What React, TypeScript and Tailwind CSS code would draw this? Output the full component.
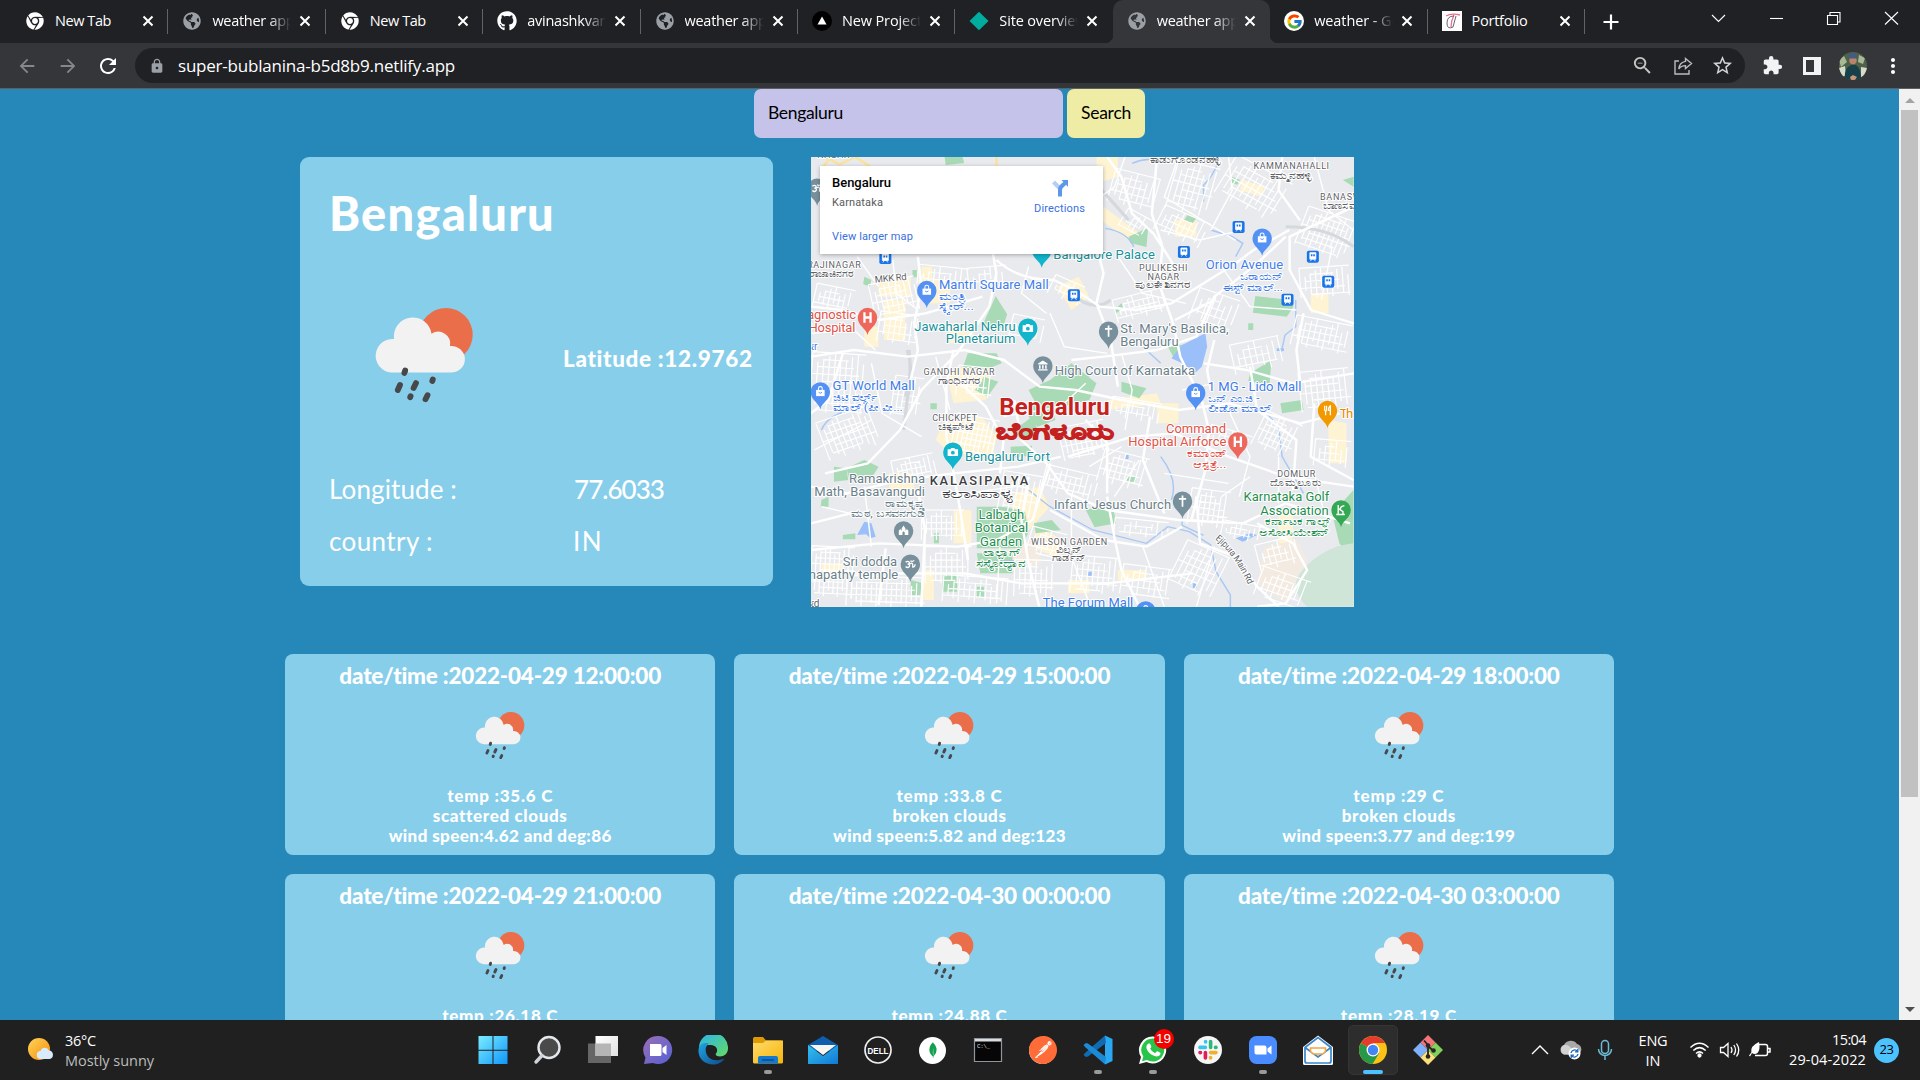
import React, { useLayoutEffect, useRef } from "react";
import { FaChrome, FaGithub, FaGlobeAmericas } from "react-icons/fa";
import { FcGoogle } from "react-icons/fc";
import {
  MdArrowBack,
  MdArrowForward,
  MdExtension,
  MdLock,
  MdMoreVert,
  MdOutlineZoomOut,
  MdRefresh,
  MdStarBorder,
} from "react-icons/md";
import { SiMongodb, SiPostman } from "react-icons/si";

/* Text tracked so that it fills a given width. */
function Fit({ w, className = "", children }: { w: number; className?: string; children: string }) {
  const ref = useRef<HTMLSpanElement>(null);
  useLayoutEffect(() => {
    const el = ref.current;
    if (!el) return;
    el.style.letterSpacing = "0px";
    const natural = el.getBoundingClientRect().width;
    el.style.letterSpacing = `${(w - natural) / children.length}px`;
  }, [w, children]);
  return (
    <span ref={ref} className={`inline-block whitespace-pre ${className}`}>
      {children}
    </span>
  );
}

/* ---------- Browser chrome ---------- */

type Tab = { title: string; w: number; icon: React.ReactNode; fade?: boolean; active?: boolean; line?: boolean };

const chromeIcon = <FaChrome className="size-[18px] text-white" />;
const globeIcon = <FaGlobeAmericas className="size-[18px] text-[#9aa0a6]" />;

const tabs: Tab[] = [
  { title: "New Tab", w: 56, icon: chromeIcon, line: true },
  { title: "weather app", w: 82, icon: globeIcon, fade: true, line: true },
  { title: "New Tab", w: 56, icon: chromeIcon, line: true },
  { title: "avinashkvar", w: 78, icon: <FaGithub className="size-5 text-white" />, fade: true, line: true },
  { title: "weather app", w: 82, icon: globeIcon, fade: true, line: true },
  {
    title: "New Project",
    w: 80,
    icon: (
      <svg viewBox="0 0 20 20" className="size-5">
        <circle cx="10" cy="10" r="10" fill="#000" />
        <path d="M10 5.500 14.500 13.500H5.500Z" fill="#fff" />
      </svg>
    ),
    fade: true,
    line: true,
  },
  {
    title: "Site overview",
    w: 87,
    icon: (
      <svg viewBox="0 0 20 20" className="size-5">
        <path d="M10 .8 19.500 10 10 19.200 .5 10Z" fill="#00ad9f" />
      </svg>
    ),
    fade: true,
  },
  { title: "weather app", w: 82, icon: globeIcon, fade: true, active: true },
  { title: "weather - Go", w: 86, icon: <span className="flex size-5 items-center justify-center rounded-full bg-white"><FcGoogle className="size-[17px]" /></span>, fade: true, line: true },
  {
    title: "Portfolio",
    w: 56,
    icon: (
      <svg viewBox="0 0 20 20" className="size-5">
        <path d="M0 0h20v20H0z" fill="#fff" />
        <path d="M4 5q5-3 14-1M12 4q-3 6-3 12" stroke="#e5738a" strokeWidth="1.300" fill="none" />
        <path d="M12 5Q5 5 5 12t6 4M14 5 11 16" stroke="#667" strokeWidth="1" fill="none" />
      </svg>
    ),
    line: true,
  },
];

function TabStrip() {
  return (
    <div className="flex h-[43px] bg-[#202124] pl-[11px] text-[14.500px] text-white">
      {tabs.map((t, i) => (
        <div
          key={i}
          className={
            t.active
              ? "relative flex w-[157.400px] items-center rounded-t-[10px] bg-[#35363a] pb-px pl-[14px]"
              : "relative flex w-[157.400px] items-center pb-px pl-[14px]"
          }
        >
          <span className="flex w-5 justify-center">{t.icon}</span>
          <span
            className={
              t.fade
                ? "ml-[10px] w-[79px] overflow-hidden pb-px [mask-image:linear-gradient(to_right,#000_72%,transparent_100%)]"
                : "ml-[10px] w-[79px] overflow-hidden pb-px"
            }
          >
            <Fit w={t.w}>{t.title}</Fit>
          </span>
          <svg viewBox="0 0 12 12" className="ml-[8px] size-3" stroke="#fff" strokeWidth="2">
            <path d="m1.500 1.500 9 9M10.500 1.500l-9 9" />
          </svg>
          {t.line && <span className="absolute right-0 top-[9px] h-[25px] w-px bg-[#606368]" />}
          {t.active && (
            <>
              <span className="absolute -left-2 bottom-0 size-2 bg-[radial-gradient(circle_at_0_0,transparent_8px,#35363a_8.500px)]" />
              <span className="absolute -right-2 bottom-0 size-2 bg-[radial-gradient(circle_at_100%_0,transparent_8px,#35363a_8.500px)]" />
            </>
          )}
        </div>
      ))}
      <div className="flex w-[52px] items-center justify-center">
        <svg viewBox="0 0 16 16" className="size-4" stroke="#fff" strokeWidth="2.200">
          <path d="M8 .5v15M.5 8h15" />
        </svg>
      </div>
      <svg viewBox="0 0 200 36" className="ml-auto mr-[19px] h-9 w-[200px]" fill="none" stroke="#fff" strokeWidth="1.100">
        <path d="m11 15 6.500 6.500 6.500-6.500" />
        <path d="M69 18.500h13" />
        <path d="M126.500 15.500h10v9h-10zM129 15v-2.500h10v9.500h-2.500" />
        <path d="m184 12 13 12.500M197 12l-13 12.500" />
      </svg>
    </div>
  );
}

function Toolbar() {
  return (
    <div className="flex h-[46px] items-start border-b border-[#5f5f62] bg-[#35363a] pt-[5px] text-[#dfe1e5]">
      <div className="flex h-[35px] w-[135px] items-center pl-4">
        <MdArrowBack className="size-[22px] text-[#85878b]" />
        <MdArrowForward className="ml-[19px] size-[22px] text-[#85878b]" />
        <MdRefresh className="ml-[17px] size-[24px] text-white" />
      </div>
      <div className="flex h-[35px] w-[1610px] items-center rounded-full bg-[#202124] pl-[14px] pr-[11px]">
        <MdLock className="size-4 text-[#9aa0a6]" />
        <Fit w={277} className="ml-[13px] text-[17px] leading-[24px] text-white">
          super-bublanina-b5d8b9.netlify.app
        </Fit>
        <MdOutlineZoomOut className="ml-auto size-[23px] text-[#c4c7c5]" />
        <svg viewBox="0 0 20 20" className="ml-[19px] size-5" fill="none" stroke="#b9bcc0" strokeWidth="1.400">
          <path d="M6 5H2v13h14v-4" />
          <path d="M12.500 2.500 18.500 7.500l-6 5V9.600C9.500 9.600 7.300 10.600 5.800 13 6.200 9 8.500 6 12.500 5.400Z" />
        </svg>
        <MdStarBorder className="ml-[18px] size-[23px] text-[#d0d2d5]" />
      </div>
      <div className="flex h-[35px] flex-1 items-center pl-[17px]">
        <MdExtension className="size-[21px] text-[#f1f3f4]" />
        <svg viewBox="0 0 18 18" className="ml-[20px] size-[18px]">
          <path d="M0 0h18v18H0z" fill="#f1f3f4" />
          <path d="M3 3h8v12H3z" fill="#35363a" />
        </svg>
        <svg viewBox="0 0 28 28" className="ml-[18px] size-7">
          <defs>
            <clipPath id="face">
              <circle cx="14" cy="14" r="14" />
            </clipPath>
          </defs>
          <g clipPath="url(#face)">
            <path d="M0 0h28v28H0z" fill="#4f6148" />
            <path d="M0 8l5-4 3 6-6 5zM20 3l6 3-2 6-5-2z" fill="#a9b995" />
            <path d="M0 16l6-2 1 9-5 3zM22 15l6 1v7l-6 2z" fill="#d6dccb" />
            <path d="M6 28q-1-8 2-12l4-3h5q5 3 5 15Z" fill="#16404a" />
            <circle cx="14" cy="8.500" r="3.700" fill="#b98468" />
            <path d="M9.500 6.500q0-6 5-5.500 4 .5 3.500 5.500Z" fill="#465a86" />
            <path d="m11 25 3-2 4 2-2 3h-4z" fill="#c99478" />
          </g>
        </svg>
        <MdMoreVert className="ml-[14px] size-[24px] text-white" />
      </div>
    </div>
  );
}

/* ---------- Weather drawing ---------- */

function WeatherIcon({ className }: { className: string }) {
  return (
    <svg viewBox="0 0 100 96" className={className}>
      <circle cx="72" cy="26.700" r="26.700" fill="#eb6e4b" />
      <path
        d="M17 64.500A16.700 16.700 0 1 1 20 31A18.800 18.800 0 0 1 57.500 25.800A12 12 0 0 1 76 38A13.300 13.300 0 1 1 78 64.500Z"
        fill="#f2f2f2"
      />
      <g stroke="#48484a" strokeWidth="5.800" strokeLinecap="round">
        <path d="m31.200 62.500-.8 2.400M26 77l-2.200 5M42 75l-2.400 5M36.600 88.200l-.4 1M58.800 71.500l-.5 1.500M53.500 87.200l-2 4" />
      </g>
    </svg>
  );
}

/* ---------- Map ---------- */

const BLUE = "#3f7de8";
const TEAL = "#16929c";
const GRAY = "#6b7f8a";
const RED = "#e25247";
const GREEN = "#1f8f50";
const AREA = "#5f6368";
const ORANGE = "#f29900";

const mx = (x: number) => x / 2.8 - 11;
const my = (y: number) => y / 3 - 77;

type Label = [string, number, number, number, number, string, number?];

const labels: Label[] = [
  ["NAGAR", 48, 234, 90, 9, AREA],
  ["ಕಾಡುಗೊಂಡನಹಳ್ಳಿ", 980, 250, 200, 8.5, AREA],
  ["KAMMANAHALLI", 1270, 268, 211, 9, AREA],
  ["ಕಮ್ಮನಹಳ್ಳಿ", 1315, 297, 120, 8.5, AREA],
  ["BANASW", 1456, 359, 114, 9, AREA],
  ["ಬಾಣಸವಾ", 1464, 386, 105, 8.5, AREA],
  ["RAJINAGAR", 20, 565, 150, 9, AREA],
  ["ರಾಜಾಜಿನಗರ", 24, 591, 126, 8.5, AREA],
  ["Mantri Square Mall", 389, 627, 307, 13, BLUE],
  ["ಮಂತ್ರಿ", 389, 660, 72, 10, BLUE],
  ["ಸ್ಕ್ವೇರ್...", 389, 691, 98, 10, BLUE],
  ["Bangalore Palace", 709, 537, 285, 13, TEAL],
  ["PULIKESHI", 949, 573, 136, 9, AREA],
  ["NAGAR", 973, 599, 88, 9, AREA],
  ["ಪುಲಕೇಶಿನಗರ", 937, 623, 158, 8.5, AREA],
  ["Orion Avenue", 1136, 567, 217, 13, BLUE],
  ["ಒರಾಯನ್", 1231, 601, 122, 10, BLUE],
  ["ಈಸ್ಟ್ ಮಾಲ್...", 1184, 632, 168, 10, BLUE],
  ["agnostic", 20, 718, 137, 13, RED],
  ["Hospital", 24, 757, 131, 13, RED],
  ["Jawaharlal Nehru", 320, 752, 284, 13, TEAL],
  ["Planetarium", 408, 790, 195, 13, TEAL],
  ["St. Mary's Basilica,", 897, 760, 303, 13, GRAY],
  ["Bengaluru", 897, 798, 163, 13, GRAY],
  ["ar", 31, 810, 18, 10, BLUE],
  ["High Court of Karnataka", 713, 885, 393, 13, GRAY],
  ["GANDHI NAGAR", 346, 886, 199, 9, AREA],
  ["ಗಾಂಧಿನಗರ", 385, 912, 122, 8.5, AREA],
  ["GT World Mall", 91, 930, 230, 13, BLUE],
  ["ಜಿಟಿ ವರ್ಲ್ಡ್", 91, 962, 124, 10, BLUE],
  ["ಮಾಲ್ (ಪೀ ವೀ...", 91, 994, 197, 10, BLUE],
  ["1 MG - Lido Mall", 1142, 933, 262, 13, BLUE],
  ["ಒನ್ ಎಂ.ಜಿ -", 1142, 965, 145, 10, BLUE],
  ["ಲೀಡೋ ಮಾಲ್", 1142, 995, 175, 10, BLUE],
  ["CHICKPET", 370, 1024, 126, 9, AREA],
  ["ಚಿಕ್ಕಪೇಟೆ", 385, 1050, 99, 8.5, AREA],
  ["Command", 1025, 1058, 168, 13, RED],
  ["Hospital Airforce", 919, 1098, 275, 13, RED],
  ["ಕಮಾಂಡ್", 1084, 1132, 109, 10, RED],
  ["ಆಸ್ಪತ್ರೆ...", 1100, 1164, 94, 10, RED],
  ["Bengaluru Fort", 462, 1143, 238, 13, TEAL],
  ["Ramakrishna", 137, 1208, 213, 13, GRAY],
  ["Math, Basavangudi", 40, 1248, 310, 13, GRAY],
  ["ರಾಮಕೃಷ್ಣ", 238, 1281, 112, 10, GRAY],
  ["ಮಠ, ಬಸವನಗುಡಿ", 143, 1311, 205, 10, GRAY],
  ["KALASIPALYA", 363, 1215, 276, 12.8, "#3c4043", 500],
  ["ಕಲಾಸಿಪಾಳ್ಯ", 398, 1254, 204, 12, "#3c4043", 500],
  ["DOMLUR", 1336, 1191, 107, 9, AREA],
  ["ದೊಮ್ಮಲೂರು", 1316, 1217, 144, 8.5, AREA],
  ["Infant Jesus Church", 711, 1288, 328, 13, GRAY],
  ["Karnataka Golf", 1242, 1264, 240, 13, GREEN],
  ["Association", 1289, 1304, 191, 13, GREEN],
  ["ಕರ್ನಾಟಕ ಗಾಲ್ಫ್", 1302, 1336, 180, 10, GREEN],
  ["ಅಸೋಸಿಯೇಶನ್", 1285, 1367, 196, 10, GREEN],
  ["Lalbagh", 500, 1318, 128, 13, GREEN],
  ["Botanical", 489, 1357, 150, 13, GREEN],
  ["Garden", 504, 1397, 118, 13, GREEN],
  ["ಲಾಲ್ಬಾಗ್", 512, 1428, 102, 10, GREEN],
  ["ಸಸ್ಯೋದ್ಯಾನ", 492, 1460, 143, 10, GREEN],
  ["WILSON GARDEN", 647, 1394, 213, 9, AREA],
  ["ವಿಲ್ಸನ್", 716, 1419, 75, 8.5, AREA],
  ["ಗಾರ್ಡನ್", 706, 1444, 95, 8.5, AREA],
  ["Sri dodda", 120, 1458, 152, 13, GRAY],
  ["Ganapathy temple", -20, 1498, 295, 13, GRAY],
  ["The Forum Mall", 680, 1582, 253, 13, BLUE],
  ["Th", 1511, 1015, 38, 13, "#e58a00"],
  ["ad", 30, 1580, 24, 10, AREA],
];

type PinKind = "bag" | "cam" | "hosp" | "cross" | "court" | "fork" | "golf" | "temple" | "om";
const pins: [number, number, string, PinKind][] = [
  [48, 377, "#78909c", "om"],
  [677, 563, "#12b5cb", "cam"],
  [355, 684, "#5491f5", "bag"],
  [1294, 527, "#5491f5", "bag"],
  [189, 765, "#ee675c", "hosp"],
  [638, 797, "#12b5cb", "cam"],
  [864, 806, "#78909c", "cross"],
  [680, 910, "#78909c", "court"],
  [57, 988, "#5491f5", "bag"],
  [1108, 991, "#5491f5", "bag"],
  [1477, 1044, ORANGE, "fork"],
  [1226, 1138, "#ee675c", "hosp"],
  [428, 1169, "#12b5cb", "cam"],
  [1071, 1316, "#78909c", "cross"],
  [1515, 1342, "#34a853", "golf"],
  [290, 1405, "#78909c", "temple"],
  [309, 1505, "#78909c", "om"],
  [968, 1645, "#5491f5", "bag"],
];

const glyphs: Record<PinKind, React.ReactNode> = {
  bag: (
    <>
      <path d="M-4.500-2h9v6.500h-9z" fill="#fff" />
      <path d="M-2-1.500v-2a2 2 0 0 1 4 0v2" fill="none" stroke="#fff" strokeWidth="1.100" />
      <path d="M-1.800.5q1.800 2 3.600 0" fill="none" stroke="#5491f5" />
    </>
  ),
  cam: (
    <>
      <path d="M-5.500-3h3l1-1.500h3L2.500-3h3v7h-11z" fill="#fff" />
      <circle cy=".5" r="2" fill="#12b5cb" />
    </>
  ),
  hosp: <path d="M-3.200-5.500v11M3.200-5.500v11M-3 0h6" stroke="#fff" strokeWidth="2.400" />,
  cross: <path d="M0-6V6M-3.800-2.500h7.600" stroke="#fff" strokeWidth="1.800" />,
  court: <path d="M0-5.500 5-2.500v1H-5v-1ZM-4-.5h1.600v3.500H-4zM-.8-.5H.8v3.500H-.8zM2.400-.5H4v3.500H2.400zM-5 3.500H5V5H-5z" fill="#fff" />,
  fork: <path d="M-3-5v4q0 1.500 1 1.500V5M-1-5v4q0 1.500-1 1.500M3 5v-10q-2 1-2 5h2" stroke="#fff" strokeWidth="1.300" fill="none" />,
  golf: <path d="M-3-5v10M3.500-4.500l-3 1-2 3L2 2v3M-5 5H4" stroke="#fff" strokeWidth="1.500" fill="none" />,
  temple: <path d="M-5 4.500V0l1.500-2L-2 0v-2.500L0-5.500 2-2.500V0l1.500-2L5 0v4.500H1.200V2a1.200 1.200 0 0 0-2.400 0v2.500z" fill="#fff" />,
  om: <path d="M-5-2q2-2 4 0 0 2-2 2 3 0 2 2.500-2 2-4 0M-.5 0q2-2 3 0v3Q5 3 5 0M0-3.500q2 1.500 4-.5" stroke="#fff" strokeWidth="1.300" fill="none" />,
};

const stations: [number, number][] = [
  [1228, 441],
  [1075, 516],
  [1436, 530],
  [1479, 605],
  [1365, 659],
  [767, 646],
  [239, 534],
];

/* Street blocks: x, y, width, height, step, angle. */
const blocks: number[][] = [
  [30, 820, 150, 180, 16, 4], [60, 1000, 150, 120, 15, -20], [30, 1400, 120, 150, 13, 3], [130, 1490, 220, 90, 14, 2],
  [200, 600, 130, 100, 14, -12], [220, 700, 110, 90, 15, 8], [40, 620, 110, 70, 14, 12], [330, 560, 140, 60, 15, 6],
  [350, 1400, 130, 110, 15, 0], [400, 1490, 180, 80, 15, 4], [870, 280, 130, 100, 16, 15], [1040, 250, 120, 150, 16, 15],
  [1180, 260, 180, 130, 17, 30], [1400, 400, 150, 120, 14, 20], [1000, 400, 140, 80, 15, 25], [1400, 560, 140, 90, 15, -4],
  [1100, 640, 120, 100, 17, 20], [880, 640, 150, 70, 14, -15], [700, 600, 90, 60, 15, 25], [470, 560, 110, 60, 16, -5],
  [1380, 720, 160, 90, 15, 12], [1400, 870, 140, 120, 16, -6], [1280, 1010, 110, 110, 14, 25], [1440, 1080, 100, 80, 15, 5],
  [870, 960, 140, 60, 15, 10], [730, 1030, 130, 100, 14, -12], [840, 1120, 130, 100, 15, 15], [560, 1180, 110, 130, 15, 10],
  [680, 1170, 150, 80, 15, 14], [260, 1130, 120, 70, 13, -12], [430, 1010, 120, 110, 13, 12], [260, 890, 80, 120, 14, 8],
  [440, 860, 100, 90, 15, 6], [760, 1430, 130, 110, 15, 5], [900, 1460, 140, 90, 16, 8], [1090, 1230, 110, 110, 14, 8],
  [1050, 1400, 130, 140, 16, 25], [1180, 1330, 110, 50, 13, 12], [1280, 1380, 120, 80, 16, -14], [1280, 1480, 140, 90, 16, 20],
  [600, 1440, 110, 110, 15, 2], [640, 1350, 100, 80, 14, 15], [340, 1290, 120, 90, 14, 0], [880, 1320, 150, 50, 15, 6],
  [1140, 1050, 120, 60, 16, 18], [590, 710, 90, 70, 15, 12], [1210, 780, 140, 90, 17, -12], [900, 400, 80, 60, 14, 30],
];

function blockPath([x, y, w, h, s]: number[]) {
  let d = "";
  for (let i = 0, k = 0; i <= w; i += s, k++) d += `M${x + i} ${y + ((k * 7) % 4) * s * 0.6}V${y + h - ((k * 5) % 3) * s * 0.7}`;
  for (let j = 0, k = 0; j <= h; j += s * 1.35, k++) d += `M${x + ((k * 5) % 3) * s} ${y + j}H${x + w - ((k * 3) % 4) * s}`;
  return d;
}

function MapPanel() {
  return (
    <div className="relative h-[450px] w-[543px] overflow-hidden bg-[#e8eaed]">
      <svg viewBox="0 0 543 450" className="block h-[450px] w-[543px]" fontFamily="Roboto, 'Noto Sans', sans-serif">
        <g transform="translate(-11 -77) scale(.357143 .333333)">
          {/* built-up areas */}
          <path
            fill="#fef3d2"
            d="M220 590h90v60h-90zM235 660h60v120h-60zM330 600h90v70h-70zM415 730h70v60h-70zM410 880l70-30 60 50-20 60-90 10zM400 1030l110-20 40 60-10 60-120-10-40-40zM600 1240l70-20 30 60-60 70-50-40zM180 740h40v60h-40zM340 560h30v40h-30zM860 960l140-20 10 30-150 20zM1000 970h60v60h-60zM1480 1020l50 10v120h-50zM660 1340l80 40-10 60-80-40zM1340 1300h40v90h-40zM830 230h60v60l-60 20zM1240 300l60 20-10 30-60-20zM850 380l100 80-30 20-90-70zM60 1450h60v40H60zM345 1470h30v90h-30zM890 1470h80v30h-80zM1050 420h60v50h-60zM720 620l60-30 30 60-50 40zM1430 640h50v60h-50zM250 1180h70v50h-70zM430 1290h50v100h-50zM750 1500h60v40h-60z"
          />
          <path fill="#f3ebe2" d="M1300 1400l90-20 30 60-60 130-80-60zM590 1400l60-20 30 70-80 20z" />
          {/* parks */}
          <g fill="#a8dab5">
            <path d="M405 231h50l5 18-52 6zM920 470l55-27-5 58-45-12zM548 648l32 55-12 40h-60zM1275 648l80 10 28 20-20 32-95-12zM470 820h80l15 30-35 15h-75zM640 930l60-30 60-50 70 60-20 50-80 20-30 30-40-40zM650 970l55 5 10 45-50 20-25-30zM515 890l40 15-30 45-35-20zM900 905l70 20-20 30-50-20zM1260 880l60-40-5 70-60-5zM1345 970l60-10 5 30-60 10zM130 1165l50-25 40 20-20 35-60 10zM95 1160l35 5 5 35-40 5zM590 1100l60-3-5 30-55 5zM800 1290l75-20 10 60-60 12zM495 1280h75l60 15 10 60-20 50-125 0zM495 1420h100v60h-90zM655 1330l50-10 25 30-70 10zM400 1485l40-10v60h-42zM310 1500l35 10-5 35h-30zM1490 1300l60-70v210l-40-50zM60 1260l20-10v30H58zM120 1365l35-5v18h-35zM1085 405l25 10-10 14-25-8zM1210 290l22 10-8 14-20-8zM180 590l20 10-5 20-18-8zM315 570h12v22h-12zM880 690l20-20 5 15-20 15zM1255 730h14v20h-14zM915 1190h25v15h-25zM1030 800l70-10 5 30-60 10zM600 1050l50-40 20 50-50 20zM365 970h18v18h-18zM760 860l50 30-30 30-40-20zM375 1360h14v30h-14zM495 1520h20v30h-20zM1520 300l30-10v30z" />
          </g>
          <path fill="#cfe5d8" d="M1400 1480q60-80 150-90v190h-130q-50-50-20-100z" />
          {/* water */}
          <g fill="#9bc0f9">
            <path d="M1040 835l30-40 65-35 5 40-15 60-20 20-35-30zM160 1365l20-40 20 5 12 40-15 5-12-12zM1220 1375l40-15 20 5-40 20zM910 1125l10 0v12h-10zM510 1445l90-5-5 12-80 8zM805 1475h12v12h-12zM1335 805h20v8h-20zM1100 1510h10v14h-10z" />
          </g>
          <g fill="none" stroke="#a8c7f5" strokeWidth="4">
            <path d="M930 250q40-20 80-5M1175 235q-20 60-45 80v50M1150 450l60 20 30 20-20 40M855 445q60 10 80 55M1388 660v80l-30 25-10 50M640 1230l60 50 120 70 150 40 60-50 60 15 60 40 15 80 40 70 0 60M1290 980l50 60 10 90 60 110M60 1050q20-50 90-60M960 800l50 50M1070 1316v20l60 30M1010 1130q50 70 30 130" />
          </g>
          {/* local streets */}
          <g fill="none" stroke="#fff" strokeWidth="3.400">
            {blocks.map((b, i) => (
              <path key={i} d={blockPath(b)} transform={`rotate(${b[5]} ${b[0] + b[2] / 2} ${b[1] + b[3] / 2})`} />
            ))}
          </g>
          {/* railway */}
          <path d="M300 810q20 60 0 150l-10 90M305 810q10 90-10 140M760 640q60 60 110 20M820 300l100 120M1360 440q120 0 190 60" fill="none" stroke="#d5d8dc" strokeWidth="9" />
          {/* main roads */}
          <g fill="none" stroke="#fff" strokeWidth="7" strokeLinejoin="round">
            <path d="M31 680l90 10 100 30 130-20 160-50M330 530l10 90-20 110 10 80-20 90M540 520l10 60-20 100-90 140-100 110-60 120-90 100-120 30M550 540q60 60 160 60l60 30 70 50 100 10 100-20 60-40 120-80 50-40 100-60" />
            <path d="M1000 231l-15 170 30 100-10 110 40 120 20 100 60 130 20 90-10 120-40 150M860 231l40 60 30 110 60 60 60 100M1350 231l-10 100 60 90M1360 470l-90 90-110 90-50 120-110 40-150 20-90 10M1551 380l-180 90 0 100 60 120 120 40M830 500l20 80-20 90 40 110 20 140" />
            <path d="M31 830l120-20 150 20 160-20 110 30 100 80 100 10 130 30 160 30 140-20 200 60 110-30M430 810l-20 100 0 160 20 110 20 120 20 140M600 960l20 120 70 70 60 90 110 50 200 30 180 10 120-60 180 60M750 1130l180-60 120-10 150 70 160 60 190 30" />
            <path d="M31 1220l100 20 150-40 150-20 180-20 120-30M31 1410l190-20 220 10 110-20 100-60 50-170M330 1230l20 120-10 230M640 1190l-20 130 20 130 30 130M860 1250l20 120 20 100 50 110M1110 1250l10 140 100 40 60 90 60 60M700 1290l150 90 120 20 100-60M1280 1330l100 60 40 80-60 100-80 10M130 1480l210 0 120 0 160 30 240 0 240-30" />
            <path d="M980 1010l-20 130 60 160M1260 860l20 130 110 90-10 150M1551 880l-170 30-130-40-120-20M1160 780l-20 90 10 60M1440 970l-10 160 120 70M120 820l-40 140-50 40M560 1180l10-100-50-100-60-60M860 1240l0-150-60-70M31 1330l110-30M240 1405l-20 170M1410 700l-20 110 10 90M1050 720l110-60" />
          </g>
          <g fill="none" stroke="#fff" strokeWidth="4">
            <path d="M910 231l-30 90-80 60M1060 231l-40 120 200 130M1200 231l10 100-60 120M1440 231l40 160 70 60M1240 450l-120 30-110-30M890 530l70 110 120 30M1180 560l80 120 130 10M1490 500l-30 160M31 760l120-10 60 60M160 530l60 90M260 540l10 100 60 50M640 560l-20 80 70 60M700 700l40 100 120 20M380 830l40 160M200 850l30 150 110 70M40 1110l160-90M570 1010l160-30 70-70M900 820l30 110-20 120M1070 930l90-20M1200 990l60 140-30 120M950 1140l-70 110M1020 1180l180 30M400 1250l200-30M180 1220l20 180M60 1280l120 30M760 1250l0 180 50 140M560 1400l-10 170M960 1400l60 180M1160 1400l-50 180M1180 1250l80-60M1340 1130l0 140M1440 1180l30 130M900 1100l-90 60" />
          </g>
          {/* highways */}
          <g fill="none" stroke="#fce29a" strokeWidth="7">
            <path d="M65 228l45 25 40-20M155 231l80 55M550 228v32M85 231l-20 30" />
          </g>
        </g>

        {stations.map(([x, y], i) => (
          <g key={i} transform={`translate(${mx(x)} ${my(y)})`}>
            <rect x="-6" y="-6" width="12" height="12" rx="1.800" fill="#1a73e8" />
            <path d="M-3-4h6v6.500h-6zM-2.500 4.500 -1 2.500M2.500 4.500 1 2.500" fill="#fff" stroke="#fff" strokeWidth=".8" />
            <path d="M-2-2.500h1.600v2H-2zM.4-2.500H2v2H.4z" fill="#1a73e8" />
          </g>
        ))}

        {pins.map(([x, y, c, k], i) => (
          <g key={i} transform={`translate(${mx(x)} ${my(y)})`}>
            <path d="M0 0C-1.500-7-9.700-9-9.700-17.500A9.700 9.700 0 0 1 9.700-17.500C9.700-9 1.500-7 0 0Z" fill={c} />
            <g transform="translate(0 -17.500) scale(.95)">{glyphs[k]}</g>
          </g>
        ))}

        <g stroke="#fff" strokeWidth="2" strokeLinejoin="round" paintOrder="stroke">
          {labels.map(([t, x, y, w, s, c, wt], i) => (
            <text
              key={i}
              x={mx(x)}
              y={my(y)}
              fontSize={s}
              fontWeight={wt ?? 400}
              fill={c}
              textLength={w / 2.8}
              lengthAdjust={t.charCodeAt(0) > 3000 ? "spacingAndGlyphs" : "spacing"}
            >
              {t}
            </text>
          ))}
          <text x={mx(558)} y={my(1005)} fontSize="24" fontWeight="700" fill="#c5221f" textLength="110.500">
            Bengaluru
          </text>
          <text x={mx(550)} y={my(1077)} fontSize="22" fontWeight="700" fill="#c5221f" stroke="#c5221f" strokeWidth="1.400" textLength="117" lengthAdjust="spacingAndGlyphs">
            ಬೆಂಗಳೂರು
          </text>
          <text transform={`translate(${mx(210)} ${my(608)}) rotate(-5)`} fontSize="9.500" fill={AREA} textLength="32">
            MKK Rd
          </text>
          <path id="ejipura" d="M404 382 Q425 399 438 430" fill="none" stroke="none" />
          <text fontSize="9.200" fill={AREA} textLength="57">
            <textPath href="#ejipura">Ejipura Main Rd</textPath>
          </text>
        </g>
      </svg>

      <div className="absolute left-[9px] top-[9px] flex h-[88px] w-[283px] justify-between bg-white pl-3 pr-[18px] font-[Roboto] shadow-[0_1px_4px_rgba(0,0,0,0.3)]">
        <div className="flex flex-col items-start pt-[8px]">
          <Fit w={59} className="text-[13px] font-medium leading-[18px] text-black">Bengaluru</Fit>
          <Fit w={51} className="mt-[3px] text-[11px] leading-[15px] text-[#5b5b5b]">Karnataka</Fit>
          <Fit w={81} className="mt-[19px] text-[11px] leading-[15px] text-[#3a6fe0]">View larger map</Fit>
        </div>
        <div className="flex flex-col items-center pt-[13px]">
          <svg viewBox="0 0 18 18" className="size-[18px]">
            <path d="M2.500 3 9 9.500" stroke="#b5cef5" strokeWidth="4" />
            <path d="M9 17.500V11q0-3 3-5l2-1.800" stroke="#5c97e8" strokeWidth="4" fill="none" />
            <path d="M10.500 1H17v6.800Z" fill="#5c97e8" />
          </svg>
          <Fit w={51} className="mt-[4px] text-[11px] leading-[15px] text-[#3a6fe0]">Directions</Fit>
        </div>
      </div>
    </div>
  );
}

/* ---------- Page ---------- */

type Forecast = { date: string; temp: string; tw: number; sky: string; sw: number; wind: string; ww: number };

const forecast: Forecast[] = [
  { date: "2022-04-29 12:00:00", temp: "35.6", tw: 106, sky: "scattered clouds", sw: 134, wind: "4.62 and deg:86", ww: 223 },
  { date: "2022-04-29 15:00:00", temp: "33.8", tw: 106, sky: "broken clouds", sw: 114, wind: "5.82 and deg:123", ww: 233 },
  { date: "2022-04-29 18:00:00", temp: "29", tw: 91, sky: "broken clouds", sw: 114, wind: "3.77 and deg:199", ww: 233 },
  { date: "2022-04-29 21:00:00", temp: "26.18", tw: 116, sky: "broken clouds", sw: 114, wind: "3.12 and deg:210", ww: 232 },
  { date: "2022-04-30 00:00:00", temp: "24.88", tw: 116, sky: "broken clouds", sw: 114, wind: "2.41 and deg:214", ww: 232 },
  { date: "2022-04-30 03:00:00", temp: "28.19", tw: 116, sky: "broken clouds", sw: 114, wind: "2.05 and deg:220", ww: 232 },
];

function ForecastCard({ f }: { f: Forecast }) {
  return (
    <div className="flex h-[201px] flex-col items-center rounded-[8px] bg-[#87ceeb] pt-[8px] text-white">
      <Fit w={322} className="text-[22.500px] font-black leading-[28px]">{`date/time :${f.date}`}</Fit>
      <WeatherIcon className="mt-[22px] h-[48px] w-[50px]" />
      <div className="mt-[26px] flex flex-col items-center text-[17px] font-black leading-5">
        <Fit w={f.tw}>{`temp :${f.temp} C`}</Fit>
        <Fit w={f.sw}>{f.sky}</Fit>
        <Fit w={f.ww}>{`wind speen:${f.wind}`}</Fit>
      </div>
    </div>
  );
}

function Page() {
  return (
    <div className="flex h-[931px] bg-[#2588b9]">
      <div className="flex flex-1 flex-col items-center overflow-hidden font-[Lato]">
        <div className="flex gap-1">
          <div className="flex h-[49px] w-[309px] items-center rounded-[7px] bg-[#c5c3ea] pl-[14px] text-[17.500px] text-black">
            <Fit w={75}>Bengaluru</Fit>
          </div>
          <div className="flex h-[49px] w-[78px] items-center justify-center rounded-[7px] bg-[#efeda5] text-[17.500px] text-black">
            <Fit w={50}>Search</Fit>
          </div>
        </div>

        <div className="mt-[19px] flex w-[1299px] gap-[38px]">
          <div className="h-[429px] w-[473px] rounded-[9px] bg-[#87ceeb] px-[30px] pt-[26px] text-white">
            <Fit w={226} className="-ml-px text-[47px] font-black leading-[60px]">Bengaluru</Fit>
            <div className="mt-[65px] flex h-[96px] items-start">
              <WeatherIcon className="ml-[44px] h-[96px] w-[100px] shrink-0" />
              <Fit w={190} className="ml-[89px] mt-[37px] shrink-0 text-[22.500px] font-black leading-[28px]">Latitude :12.9762</Fit>
            </div>
            <div className="mt-[65px] grid grid-cols-[244px_1fr] gap-y-3 text-[26px] leading-10">
              <div className="-ml-px"><Fit w={128}>Longitude :</Fit></div>
              <div><Fit w={90} className="font-medium">77.6033</Fit></div>
              <div className="-ml-px"><Fit w={104}>country :</Fit></div>
              <div className="-ml-px"><Fit w={30}>IN</Fit></div>
            </div>
          </div>
          <MapPanel />
        </div>

        <div className="mt-[47px] grid w-[1329px] shrink-0 grid-cols-3 gap-[19px]">
          {forecast.map((f) => (
            <ForecastCard key={f.date} f={f} />
          ))}
        </div>
      </div>
      <div className="flex w-[21px] flex-col items-center bg-[#f1f1f1]">
        <svg viewBox="0 0 21 21" className="size-[21px]"><path d="M6 14h10l-5-5z" fill="#a3a3a3" /></svg>
        <div className="h-[687px] w-[17px] bg-[#c1c1c1]" />
        <svg viewBox="0 0 21 21" className="mt-auto size-[21px]"><path d="M6 8h10l-5 5z" fill="#505050" /></svg>
      </div>
    </div>
  );
}

/* ---------- Taskbar ---------- */

function Grad({ id, from, to }: { id: string; from: string; to: string }) {
  return (
    <linearGradient id={id} x1="0" y1="0" x2="1" y2="1">
      <stop offset="0" stopColor={from} />
      <stop offset="1" stopColor={to} />
    </linearGradient>
  );
}

const Ico = ({ children }: { children: React.ReactNode }) => (
  <svg viewBox="0 0 30 30" className="size-[30px]">{children}</svg>
);

const apps: { el: React.ReactNode; dot?: boolean; active?: boolean; badge?: string }[] = [
  {
    el: (
      <Ico>
        <defs><linearGradient id="win" gradientUnits="userSpaceOnUse" x1="0" y1="0" x2="30" y2="30"><stop offset="0" stopColor="#7defff" /><stop offset="1" stopColor="#0c94fb" /></linearGradient></defs>
        <path d="M.5 1h14v13.700H.5zM15.500 1h14v13.700h-14zM.5 15.700h14V29H.5zM15.500 15.700h14V29h-14z" fill="url(#win)" />
      </Ico>
    ),
  },
  {
    el: (
      <Ico>
        <circle cx="16" cy="12.500" r="10.500" fill="#4a4a4a" stroke="#e4e8ec" strokeWidth="2.400" />
        <path d="m9 20.500-6 6.500" stroke="#cfd4d9" strokeWidth="3.400" strokeLinecap="round" />
      </Ico>
    ),
  },
  {
    el: (
      <Ico>
        <defs><Grad id="tv" from="#fff" to="#e1e1e1" /></defs>
        <path d="M0 8.500h23V28H0z" fill="#666" />
        <path d="M7.500 1H30v20H7.500z" fill="url(#tv)" />
        <path d="M7.500 8.500H23V21H7.500z" fill="#b5b5b5" />
      </Ico>
    ),
  },
  {
    el: (
      <Ico>
        <defs><Grad id="chat" from="#9a6fb5" to="#5560d6" /></defs>
        <path d="M15 1a14 14 0 1 1-5 27L1 29l1.500-6.500A14 14 0 0 1 15 1Z" fill="url(#chat)" />
        <path d="M7 9h10a1.500 1.500 0 0 1 1.500 1.500v9A1.500 1.500 0 0 1 17 21H7zM19.500 13l4-3v10l-4-3z" fill="#fff" />
      </Ico>
    ),
  },
  {
    el: (
      <Ico>
        <defs>
          <Grad id="edA" from="#2bb3ee" to="#65dc62" />
          <Grad id="edB" from="#1fa5e6" to="#114a8b" />
        </defs>
        <path d="M1 12A14.500 14.500 0 0 1 30 13.500c0 5-4 8-8 8s-5-2-4-3c2-2 2-8-5-8.500-6-.3-10 2-12 6Z" fill="url(#edA)" />
        <path d="M.5 15C1 9.500 6 7 11 8.500 7 11 7 16 9 20c2.500 5 9 7 17.500 3.500C22 31 11 31 5 26 1.500 23 .3 19 .5 15Z" fill="url(#edB)" />
      </Ico>
    ),
  },
  {
    el: (
      <Ico>
        <defs><Grad id="fold" from="#ffdb6b" to="#f5b50a" /></defs>
        <path d="M0 3.500Q0 2 1.500 2H10l3 3.500h15q1.500 0 1.500 1.500V14H0z" fill="#dd9a06" />
        <path d="M0 8h10l3-2.500h17V27q0 1.500-1.500 1.500h-27Q0 28.500 0 27z" fill="url(#fold)" />
        <path d="M5 28.500V23q0-2 2-2h16q2 0 2 2v5.500z" fill="#1379d0" />
        <path d="M9 25h12" stroke="#0a4c8e" strokeWidth="1.500" />
      </Ico>
    ),
    dot: true,
  },
  {
    el: (
      <Ico>
        <defs><Grad id="ml" from="#34c1f0" to="#1178d4" /></defs>
        <path d="M0 10 15 1l15 9v6H0z" fill="#0f5ead" />
        <path d="M2 10h26L15 20z" fill="#f5f5f5" />
        <path d="M0 10l15 11L30 10v19H0z" fill="url(#ml)" />
      </Ico>
    ),
  },
  {
    el: (
      <Ico>
        <circle cx="15" cy="15" r="13" fill="none" stroke="#eee" strokeWidth="1.700" />
        <text x="4.500" y="18.500" fontSize="9.500" fontWeight="700" fill="#fff" fontFamily="Liberation Sans" textLength="21" lengthAdjust="spacingAndGlyphs">DELL</text>
      </Ico>
    ),
  },
  {
    el: (
      <span className="flex size-[27px] items-center justify-center rounded-full bg-white">
        <SiMongodb className="size-[16px] text-[#12a04f]" />
      </span>
    ),
  },
  {
    el: (
      <Ico>
        <path d="M1.500 3.500h27v23h-27z" fill="#060606" stroke="#8f959b" strokeWidth="1.200" />
        <path d="M2 4h26v2.500H2z" fill="#d9dde0" />
        <text x="4" y="12.500" fontSize="6" fill="#ddd" fontFamily="Liberation Mono" textLength="13">C:\_</text>
      </Ico>
    ),
  },
  { el: <span className="flex size-[27px] items-center justify-center rounded-full bg-white"><SiPostman className="size-[28px] shrink-0 text-[#ff6c37]" /></span> },
  {
    el: (
      <Ico>
        <path d="M22 .5 29.500 4v22L22 29.500z" fill="#2aa9f2" />
        <path d="M22 .5 2 18l-1.500 2 2.500 2 2-.5L23 8z" fill="#0f6cb3" />
        <path d="M22 29.500 2 12l-1.500-2L3 8l2 .5L23 22z" fill="#1c8ad4" />
      </Ico>
    ),
    dot: true,
  },
  {
    el: (
      <Ico>
        <path d="M15 1.500A13.500 13.500 0 1 1 8.500 27L1 29l2-7A13.500 13.500 0 0 1 15 1.500Z" fill="#fff" />
        <path d="M15 3.500A11.500 11.500 0 1 1 9 25l-5 1.300L5.300 21.500A11.500 11.500 0 0 1 15 3.500Z" fill="#29c54b" />
        <path d="M10.500 8.500q1.500-.5 2 1l.8 2q.2.800-1.200 2 1.700 3.500 5 4.700l1.500-1.700q.6-.5 1.400 0l2.300 1.200q.6.800-.3 2.300-2 2.300-5.500 1-6-2-8-7.500-.7-3.500 2-5Z" fill="#fff" />
      </Ico>
    ),
    dot: true,
    badge: "19",
  },
  {
    el: (
      <Ico>
        <circle cx="15" cy="15" r="14" fill="#f6f6f6" />
        <g strokeWidth="3.600" strokeLinecap="round" fill="none">
          <path d="M12.600 6.500v.5M7 12.400h5.400" stroke="#36c5f0" />
          <path d="M17.600 6.500v6M23 12.400h-.5" stroke="#2eb67d" />
          <path d="M17.600 17.600h5.400M17.600 23v-.5" stroke="#ecb22e" />
          <path d="M12.400 17.600V23M7 17.600h.5" stroke="#e01e5a" />
        </g>
      </Ico>
    ),
  },
  {
    el: (
      <Ico>
        <rect x="1" y="1" width="28" height="28" rx="7.500" fill="#4a8cff" />
        <path d="M6.500 10.500h10q2 0 2 2v7h-10q-2 0-2-2zM19.500 13.500l4-3v9l-4-3z" fill="#fff" />
      </Ico>
    ),
    dot: true,
  },
  {
    el: (
      <Ico>
        <path d="M0 12 15 .5 30 12v16.500q0 1.500-1.500 1.500h-27Q0 30 0 28.500z" fill="#fff" />
        <path d="M2 12.500 15 2.500l13 10V26q0 2-2 2H4q-2 0-2-2zl13 9.500 13-9.500" fill="none" stroke="#3a86c8" strokeWidth="1.700" />
        <path d="M7.500 13h15v3.500l-3 2.500h-9l-3-2.500z" fill="#fff" stroke="#f0a63c" strokeWidth="1.600" />
      </Ico>
    ),
  },
  {
    el: (
      <Ico>
        <circle cx="15" cy="15" r="14" fill="#fbc116" />
        <path d="M15 15 2.900 8A14 14 0 0 0 14.500 29L21 18.500Z" fill="#279847" />
        <path d="M2.900 8A14 14 0 0 1 27.100 8H15v7Z" fill="#e33b2e" />
        <circle cx="15" cy="15" r="6.500" fill="#fff" />
        <circle cx="15" cy="15" r="5.200" fill="#4286f5" />
      </Ico>
    ),
    active: true,
  },
  {
    el: (
      <Ico>
        <path d="M15 0 22.500 7.500 15 15 7.500 7.500Z" fill="#f3757a" />
        <path d="M22.500 7.500 30 15l-7.500 7.500L15 15Z" fill="#82cf5b" />
        <path d="M7.500 7.500 15 15l-7.500 7.500L0 15Z" fill="#7fb0fa" />
        <path d="M15 15l7.500 7.500L15 30l-7.500-7.500Z" fill="#fae07a" />
        <path d="M11 5.500 15 10v11M15 11l5 4.500" stroke="#262626" strokeWidth="1.800" fill="none" />
        <g fill="#262626"><circle cx="15" cy="10.500" r="2.300" /><circle cx="20.500" cy="15.500" r="2.300" /><circle cx="15" cy="21.500" r="2.300" /></g>
      </Ico>
    ),
  },
];

function Taskbar() {
  return (
    <div className="flex h-[60px] bg-[#202020] text-white">
      <div className="flex w-[465px] items-center pl-7">
        <svg viewBox="0 0 26 26" className="size-[26px]">
          <defs><Grad id="sun" from="#ffd35a" to="#f58f0a" /></defs>
          <circle cx="11" cy="12" r="11" fill="url(#sun)" />
          <path d="M13 22a4 4 0 0 1-.5-8A4.500 4.500 0 0 1 21 13.500a4.300 4.300 0 0 1 .5 8.500Z" fill="#d9ebfa" />
        </svg>
        <div className="ml-[11px] flex flex-col items-start pt-px text-[14.500px] leading-5">
          <Fit w={31}>36°C</Fit>
          <Fit w={89} className="text-[#bdbdbd]">Mostly sunny</Fit>
        </div>
      </div>
      <div className="flex">
        {apps.map((a, i) => (
          <div key={i} className="relative flex w-[55.060px] items-center justify-center">
            <div
              className={
                a.active
                  ? "flex size-[50px] items-center justify-center rounded-[5px] border border-[#353535] bg-[#2d2d2d]"
                  : "flex size-[50px] items-center justify-center"
              }
            >
              {a.el}
            </div>
            {a.dot && <span className="absolute bottom-[6px] h-1 w-2 rounded-full bg-[#9a9a9a]" />}
            {a.active && <span className="absolute bottom-[6px] h-1 w-5 rounded-full bg-[#4cc2ff]" />}
            {a.badge && (
              <span className="absolute left-[28px] top-[9px] flex size-5 items-center justify-center rounded-full bg-[#f80000] font-['Liberation_Sans'] text-[13.500px]">
                {a.badge}
              </span>
            )}
          </div>
        ))}
      </div>
      <div className="ml-auto flex items-center pr-[21px]">
        <svg viewBox="0 0 86 30" className="h-[30px] w-[86px]" fill="none">
          <path d="m2 19 8-8 8 8" stroke="#fff" strokeWidth="1.400" />
          <path d="M34 19.500a5 5 0 0 1 0-9.500A7.500 7.500 0 0 1 47 9a5.500 5.500 0 0 1 3 9l-2 1.500Z" fill="#a9a9a9" />
          <path d="M34 19.500a5 5 0 0 1 3-9.500q5 2 8 9.500Z" fill="#d2d2d2" />
          <circle cx="44.500" cy="18.500" r="6" fill="#fff" />
          <path d="M41 18a3.600 3.600 0 0 1 6.500-1.500M48 19a3.600 3.600 0 0 1-6.500 1.500M47.800 14v2.800H45M41.200 23v-2.800H44" stroke="#1767c0" strokeWidth="1.300" />
          <rect x="71.500" y="5.500" width="7" height="13" rx="3.500" stroke="#6cbbd6" strokeWidth="1.500" />
          <path d="M68.500 14a6.500 6.500 0 0 0 13 0M75 20.500V25" stroke="#6cbbd6" strokeWidth="1.500" />
        </svg>
        <div className="ml-[21px] flex w-[32px] flex-col items-center pt-px text-[14.500px] leading-5">
          <Fit w={29}>ENG</Fit>
          <Fit w={15}>IN</Fit>
        </div>
        <svg viewBox="0 0 82 24" className="ml-[20px] h-6 w-[82px]" fill="none" stroke="#fff" strokeWidth="1.500">
          <path d="M1.500 9.500q9-8.500 18 0M4.300 12.500q6.200-5.800 12.400 0M7 15.500q3.500-3.300 7 0" />
          <circle cx="10.500" cy="17.500" r="1.400" fill="#fff" />
          <path d="M31.500 9.500h3l4.500-4v13l-4.500-4h-3zM42 9q2 3 0 6M44.800 7q3.500 5 0 10M47.500 5.500q4.500 6.500 0 13" strokeWidth="1.300" />
          <path d="M70 6.500h6.500q2 0 2 2v7q0 2-2 2H66M79 10.500h2v3.500h-2" />
          <path d="M70 4q1.500 8-1.500 11-3 2-5.500 0L61 18.500 60 17.500l2.300-3Q61 8 70 4Z" fill="#fff" stroke="none" />
        </svg>
        <div className="ml-[17px] flex w-[78px] flex-col items-end text-[14.500px] leading-5">
          <Fit w={34}>15:04</Fit>
          <Fit w={77}>29-04-2022</Fit>
        </div>
        <span className="ml-[8px] flex size-[25px] items-center justify-center rounded-full bg-[#4cc2ff] text-[13px] text-black">
          <Fit w={14}>23</Fit>
        </span>
      </div>
    </div>
  );
}

export default function App() {
  return (
    <div className="h-[1080px] w-[1920px] overflow-hidden font-['Open_Sans',sans-serif]">
      <TabStrip />
      <Toolbar />
      <Page />
      <Taskbar />
    </div>
  );
}
